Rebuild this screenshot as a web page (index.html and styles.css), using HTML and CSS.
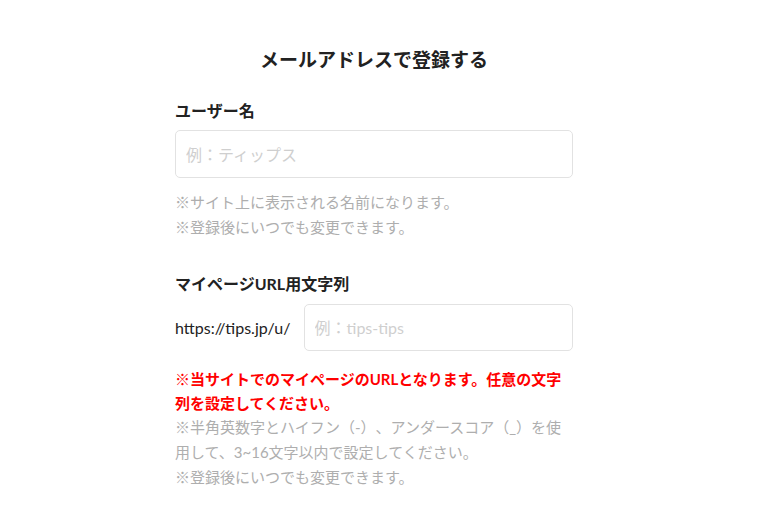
FILE: index.html
```html
<!DOCTYPE html>
<html lang="ja">
<head>
    <meta charset="UTF-8">
    <meta name="viewport" content="width=device-width, initial-scale=1.0">
    <title>メールアドレスで登録する</title>
    <link rel="stylesheet" href="styles.css">
</head>
<body>
    <div class="signup">
        <h1>メールアドレスで登録する</h1>

        <div class="field">
            <label for="username">ユーザー名</label>
            <input type="text" id="username" class="text-input" placeholder="例：ティップス">
            <p class="note">※サイト上に表示される名前になります。<br>※登録後にいつでも変更できます。</p>
        </div>

        <div class="field field-url">
            <label for="slug">マイページURL用文字列</label>
            <div class="url-row">
                <span class="url-prefix">https://tips.jp/u/</span>
                <input type="text" id="slug" class="text-input" placeholder="例：tips-tips">
            </div>
            <p class="warning">※当サイトでのマイページのURLとなります。任意の文字列を設定してください。</p>
            <p class="note">※半角英数字とハイフン（-）、アンダースコア（_）を使用して、3~16文字以内で設定してください。<br>※登録後にいつでも変更できます。</p>
        </div>
    </div>
</body>
</html>
```

FILE: styles.css
```css
body {
    margin: 0;
    padding: 0;
    background: #fff;
    color: #222;
    font-family: "Lato", "Noto Sans CJK JP", sans-serif;
    text-spacing-trim: space-all;
}

.signup {
    width: 398px;
    margin: 0 0 0 175px;
    padding-top: 45px;
}

h1 {
    margin: 0;
    font-size: 19px;
    line-height: 30px;
    font-weight: bold;
    text-align: center;
}

.field {
    margin-top: 24px;
}

.field-url {
    margin-top: 32px;
}

label {
    display: block;
    font-size: 16px;
    line-height: 24px;
    font-weight: bold;
}

.text-input {
    display: block;
    box-sizing: border-box;
    width: 100%;
    height: 48px;
    margin-top: 7px;
    padding: 0 10px;
    border: 1px solid #e2e2e2;
    border-radius: 5px;
    font-family: inherit;
    font-size: 16px;
    color: #222;
    outline: none;
    text-spacing-trim: space-all;
}

.text-input::placeholder {
    color: #cfcfcf;
}

.note {
    margin: 12px 0 0;
    font-size: 15px;
    line-height: 25px;
    color: #aeaeae;
}

.url-row {
    display: flex;
    align-items: center;
    gap: 13px;
    margin-top: 8px;
}

.url-row .text-input {
    flex: 1;
    margin-top: 0;
    height: 47px;
}

.url-prefix {
    font-size: 16px;
    white-space: nowrap;
}

.warning {
    margin: 16px 0 0;
    font-size: 15px;
    line-height: 24px;
    font-weight: bold;
    color: #f00;
}

.warning + .note {
    margin-top: 0;
}
```
